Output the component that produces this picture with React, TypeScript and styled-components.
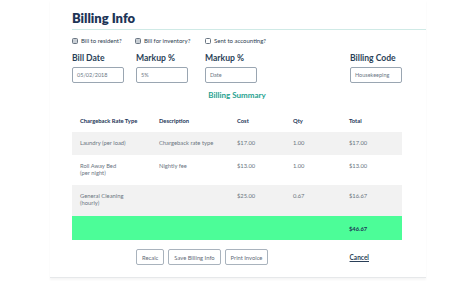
import React from 'react';
import styled, { createGlobalStyle } from 'styled-components';

const GlobalStyle = createGlobalStyle`
  body {
    margin: 0;
    background: #fff;
    font-family: 'Lato', 'Noto Sans', sans-serif;
  }
`;

const Page = styled.div`
  width: 474px;
  height: 284px;
  overflow: hidden;
`;

const Card = styled.div`
  margin: 0 48px 0 50px;
  padding: 9px 0 12px 22px;
  border-bottom: 1px solid #e6e8ea;
  box-shadow: 0 2px 2px rgba(0, 0, 0, 0.04);
`;

const Title = styled.h1`
  margin: 0;
  font-size: 13px;
  font-weight: 800;
  color: #1d3557;
  padding: 1px 0 3px;
  border-bottom: 1px solid #cfeae6;
`;

const CheckRow = styled.div`
  display: flex;
  margin-top: 7px;
  font-size: 6px;
  color: #2d3e50;
`;

const Check = styled.label<{ w: number }>`
  display: flex;
  align-items: center;
  gap: 3px;
  width: ${(p) => p.w}px;
`;

const Box = styled.span<{ filled?: boolean }>`
  width: 4px;
  height: 4px;
  border: 0.8px solid #6a7683;
  border-radius: 1.5px;
  background: ${(p) => (p.filled ? '#c9cfd5' : '#fff')};
`;

const Fields = styled.div`
  display: flex;
  margin-top: 9px;
  width: 330px;
`;

const Field = styled.div<{ ml: number }>`
  display: flex;
  flex-direction: column;
  margin-left: ${(p) => p.ml}px;
`;

const Label = styled.div`
  font-size: 8.6px;
  font-weight: 700;
  color: #2a3f58;
  margin-bottom: 4px;
`;

const Input = styled.div`
  width: 46px;
  height: 14px;
  border: 1px solid #9aa6b2;
  border-radius: 2px;
  font-size: 5.5px;
  color: #6b7785;
  display: flex;
  align-items: center;
  padding-left: 4px;
`;

const SummaryTitle = styled.div`
  width: 330px;
  text-align: center;
  margin-top: 7px;
  font-size: 8px;
  font-weight: 700;
  color: #27a28f;
`;

const Table = styled.div`
  width: 330px;
  margin-top: 8px;
`;

const Row = styled.div<{ bg?: string; h: number; top?: boolean }>`
  display: grid;
  grid-template-columns: 79px 78px 56px 56px 1fr;
  padding-left: 8px;
  height: ${(p) => p.h}px;
  background: ${(p) => p.bg || 'transparent'};
  align-items: ${(p) => (p.top ? 'start' : 'center')};
  padding-top: ${(p) => (p.top ? 8 : 0)}px;
  box-sizing: border-box;
`;

const HeadCell = styled.div`
  font-size: 5.8px;
  font-weight: 700;
  color: #1d3557;
`;

const Cell = styled.div`
  font-size: 5.8px;
  color: #6a7580;
  line-height: 6.5px;
`;

const TotalCell = styled.div`
  font-size: 5.8px;
  font-weight: 700;
  color: #1d3557;
`;

const Actions = styled.div`
  display: flex;
  align-items: center;
  width: 330px;
  margin-top: 9px;
  padding-left: 64px;
  box-sizing: border-box;
`;

const Button = styled.button`
  font-family: inherit;
  font-size: 5.8px;
  color: #5f6b78;
  background: #fff;
  border: 1px solid #a9b3bd;
  border-radius: 2px;
  height: 16px;
  padding: 0 5px;
  margin-right: 4px;
`;

const Cancel = styled.a`
  margin-left: auto;
  margin-right: 33px;
  font-size: 6.5px;
  font-weight: 700;
  color: #2a3f58;
  text-decoration: underline;
`;

const rows = [
  { h: 23, bg: '#f2f2f2', c: ['Laundry (per load)', 'Chargeback rate type', '$17.00', '1.00', '$17.00'] },
  { h: 30, top: true, c: ['Roll Away Bed\n(per night)', 'Nightly fee', '$13.00', '1.00', '$13.00'] },
  { h: 31, top: true, bg: '#f2f2f2', c: ['General Cleaning\n(hourly)', '', '$25.00', '0.67', '$16.67'] },
];

export default function App() {
  return (
    <Page>
      <GlobalStyle />
      <Card>
        <Title>Billing Info</Title>
        <CheckRow>
          <Check w={63}><Box filled />Bill to resident?</Check>
          <Check w={70}><Box filled />Bill for inventory?</Check>
          <Check w={80}><Box />Sent to accounting?</Check>
        </CheckRow>
        <Fields>
          <Field ml={0}><Label>Bill Date</Label><Input>05/02/2018</Input></Field>
          <Field ml={12}><Label>Markup %</Label><Input>5%</Input></Field>
          <Field ml={17}><Label>Markup %</Label><Input>Date</Input></Field>
          <Field ml={93}><Label>Billing Code</Label><Input>Housekeeping</Input></Field>
        </Fields>
        <SummaryTitle>Billing Summary</SummaryTitle>
        <Table>
          <Row h={24}>
            <HeadCell>Chargeback Rate Type</HeadCell>
            <HeadCell>Description</HeadCell>
            <HeadCell>Cost</HeadCell>
            <HeadCell>Qty</HeadCell>
            <HeadCell>Total</HeadCell>
          </Row>
          {rows.map((r, i) => (
            <Row key={i} h={r.h} bg={r.bg} top={r.top}>
              {r.c.map((t, j) => (
                <Cell key={j}>
                  {t.split('\n').map((l, k) => <div key={k}>{l}</div>)}
                </Cell>
              ))}
            </Row>
          ))}
          <Row h={24} bg="#4cfd98">
            <div /><div /><div /><div />
            <TotalCell>$46.67</TotalCell>
          </Row>
        </Table>
        <Actions>
          <Button>Recalc</Button>
          <Button>Save Billing Info</Button>
          <Button>Print Invoice</Button>
          <Cancel>Cancel</Cancel>
        </Actions>
      </Card>
    </Page>
  );
}
